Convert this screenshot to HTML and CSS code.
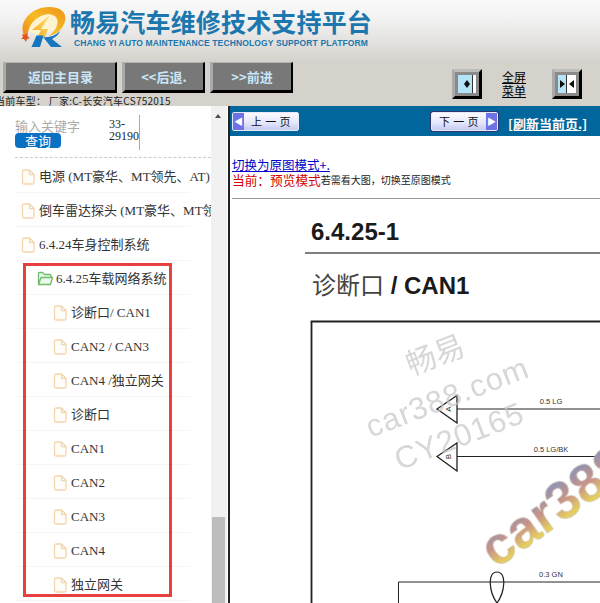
FILE: index.html
```html
<!DOCTYPE html>
<html lang="zh">
<head>
<meta charset="utf-8">
<title>畅易汽车维修技术支持平台</title>
<link rel="stylesheet" href="styles.css">
</head>
<body>
<header class="banner">
  <svg class="logo" width="48" height="42" viewBox="0 0 48 42">
    <defs>
      <linearGradient id="ring" x1="0" y1="1" x2="1" y2="0">
        <stop offset="0" stop-color="#ee8418"/>
        <stop offset="0.5" stop-color="#f8bb24"/>
        <stop offset="1" stop-color="#ee9218"/>
      </linearGradient>
      <linearGradient id="bolt" x1="0" y1="1" x2="1" y2="0">
        <stop offset="0" stop-color="#f4a41c"/>
        <stop offset="1" stop-color="#fbe27a"/>
      </linearGradient>
    </defs>
    <ellipse cx="24" cy="16" rx="16" ry="11" fill="#fdf3cf" transform="rotate(-20 24 16)"/>
    <path d="M6 30C-2 18 10 0 30 0c12 0 18 6 16 14-2 8-8 13-16 15 6-5 10-11 8-17-2-5-10-6-16-3C12 14 8 22 9 31z" fill="url(#ring)"/>
    <path d="M31 8 13 23h9l-5 10 9-3 3-8h-7z" fill="url(#bolt)"/>
    <path d="M3 27l3 1 2-2 0 3 3 2-3 1-1 3-2-3-3 0 2-2z" fill="#e2541c"/>
    <path d="M12.500 40 17.500 28.500H24.500L21 40zM24 30c6 1 12-1 17-6-1 3-4 6-8 8l10 8H32z" fill="#1677c0"/>
  </svg>
  <div class="brand">
    <div class="brand-cn">畅易汽车维修技术支持平台</div>
    <div class="brand-en">CHANG YI AUTO MAINTENANCE TECHNOLOGY SUPPORT PLATFORM</div>
  </div>
</header>

<section class="toolbar">
  <div class="toolbar-main">
    <div class="nav-buttons">
      <a class="bevel-btn btn-home">返回主目录</a>
      <a class="bevel-btn btn-back">&lt;&lt;后退.</a>
      <a class="bevel-btn btn-next">&gt;&gt;前进</a>
    </div>
    <div class="car-info">当前车型： 厂家:C-长安汽车CS752015</div>
  </div>
  <div class="toolbar-tools">
    <div class="tool-icon">
      <svg width="18" height="18" viewBox="0 0 18 18"><rect width="18" height="18" fill="#b4e4f6"/><rect x="15" width="3" height="18" fill="#fff"/><rect x="14" width="1" height="18" fill="#333"/><path d="M6 9l3-4 3 4-3 4z" fill="#111"/></svg>
    </div>
    <a class="fullscreen-link">全屏<br>菜单</a>
    <div class="tool-icon">
      <svg width="18" height="18" viewBox="0 0 18 18"><rect width="9" height="18" fill="#b4e4f6"/><rect x="9" width="9" height="18" fill="#fff"/><rect x="8" width="1" height="18" fill="#333"/><path d="M2 5l5 4-5 4zM16 5l-5 4 5 4z" fill="#111"/></svg>
    </div>
  </div>
</section>

<main class="workspace">
  <aside class="sidebar">
    <div class="side-scroll">
      <div class="search">
        <div class="search-left">
          <div class="search-label">输入关键字</div>
          <button class="search-btn">查询</button>
        </div>
        <div class="search-code">33-<br>29190</div>
      </div>
      <ul class="tree">
        <li class="row"><svg class="doc"><use href="#doc"/></svg><span>电源 (MT豪华、MT领先、AT)</span></li>
        <li class="row"><svg class="doc"><use href="#doc"/></svg><span>倒车雷达探头 (MT豪华、MT领先、AT)</span></li>
        <li class="row"><svg class="doc"><use href="#doc"/></svg><span>6.4.24车身控制系统</span></li>
        <li class="row row-folder">
          <svg class="folder" width="17" height="15" viewBox="0 0 17 15"><path d="M1.500 13V2.500q0-1 1-1h3l2 2h5.500q1 0 1 1V6M1.500 13.500 4 6.500h11.500L13.500 13.500z" fill="#eef8ea" stroke="#6cbc6c" stroke-width="1.300" stroke-linejoin="round"/></svg>
          <span>6.4.25车载网络系统</span>
        </li>
        <li class="row row-child"><svg class="doc"><use href="#doc"/></svg><span>诊断口/ CAN1</span></li>
        <li class="row row-child"><svg class="doc"><use href="#doc"/></svg><span>CAN2 / CAN3</span></li>
        <li class="row row-child"><svg class="doc"><use href="#doc"/></svg><span>CAN4 /独立网关</span></li>
        <li class="row row-child"><svg class="doc"><use href="#doc"/></svg><span>诊断口</span></li>
        <li class="row row-child"><svg class="doc"><use href="#doc"/></svg><span>CAN1</span></li>
        <li class="row row-child"><svg class="doc"><use href="#doc"/></svg><span>CAN2</span></li>
        <li class="row row-child"><svg class="doc"><use href="#doc"/></svg><span>CAN3</span></li>
        <li class="row row-child"><svg class="doc"><use href="#doc"/></svg><span>CAN4</span></li>
        <li class="row row-child"><svg class="doc"><use href="#doc"/></svg><span>独立网关</span></li>
      </ul>
      <div class="highlight-box"></div>
    </div>
    <div class="scrollbar">
      <div class="scroll-up"></div>
      <div class="scroll-thumb"></div>
    </div>
  </aside>

  <section class="content">
    <div class="pager">
      <a class="page-btn page-prev"><span class="page-arrow">&#9664;</span><span class="page-text">上 一 页</span></a>
      <a class="page-btn page-next"><span class="page-text">下 一 页</span><span class="page-arrow">&#9654;</span></a>
      <a class="refresh">[刷新当前页.]</a>
    </div>
    <div class="mode">
      <a class="mode-link">切换为原图模式+.</a>
      <div class="mode-line"><span class="mode-now">当前：预览模式</span><span class="mode-hint">若需看大图，切换至原图模式</span></div>
    </div>
    <svg class="sheet" width="370" height="405" viewBox="230 198 370 405">
      <defs>
        <linearGradient id="rainbow" x1="0" y1="0" x2="0" y2="1">
          <stop offset="0.15" stop-color="#8b93b8"/>
          <stop offset="0.5" stop-color="#c99388"/>
          <stop offset="0.78" stop-color="#e6cf5e"/>
          <stop offset="1" stop-color="#b5ae9c"/>
        </linearGradient>
      </defs>
      <text x="311" y="240" class="sheet-no">6.4.25-1</text>
      <line x1="305" y1="253" x2="600" y2="253" stroke="#555" stroke-width="1.500"/>
      <text x="312" y="294" class="sheet-title"><tspan class="sheet-cjk">诊断口</tspan> / CAN1</text>

      <g fill="none" stroke="#222">
        <path d="M600 321.500H311.500V603" stroke-width="1.800"/>
        <path d="M437 409 457 395.500V423z" stroke-width="1.300"/>
        <path d="M437 456.500 457 443V471z" stroke-width="1.300"/>
        <path d="M457 409H600M457 456.500H600" stroke-width="1"/>
        <path d="M398.500 603V582H600" stroke-width="1"/>
        <path d="M497 603C489 592 487 572 497 572 507 572 505 592 497 603z" stroke-width="1.200"/>
      </g>
      <text class="pin" transform="translate(449 409) rotate(-90)">A</text>
      <text class="pin" transform="translate(449 456.500) rotate(-90)">B</text>
      <text x="551" y="404" class="wire">0.5 LG</text>
      <text x="551" y="452" class="wire">0.5 LG/BK</text>
      <text x="551" y="577" class="wire">0.3 GN</text>

      <g class="mark">
        <text class="mark-cn" transform="translate(439 365) rotate(-21)">畅易</text>
        <text class="mark-en" transform="translate(451 407) rotate(-21)">car388.com</text>
        <text class="mark-en" transform="translate(463 446) rotate(-21)">CY20165</text>
      </g>
      <text class="mark-big" transform="translate(496 569) rotate(-35)">car388</text>
    </svg>
  </section>
</main>

<svg class="sprite" width="0" height="0">
  <symbol id="doc" viewBox="0 0 14 16">
    <path d="M1.500 2.500q0-1.500 1.500-1.500h5.500l4.500 4.500v8q0 1.500-1.500 1.500H3q-1.500 0-1.500-1.500zM8.500 1v4.500H13" fill="#fffdf9" stroke="#f5d5ad" stroke-width="1.300" stroke-linejoin="round"/>
  </symbol>
</svg>
</body>
</html>
```

FILE: styles.css
```css
* { box-sizing: border-box; }
html, body { margin: 0; padding: 0; }
body {
  width: 600px;
  height: 603px;
  overflow: hidden;
  background: #fff;
  font-family: "Liberation Serif", "Noto Sans CJK SC", serif;
  color: #333;
}

.banner {
  height: 61px;
  display: flex;
  align-items: flex-start;
  padding: 7px 0 0 19px;
  background: linear-gradient(#f9f9f9 0%, #f3f3f3 30%, #d6d3ce 100%);
}
.logo { flex: none; margin-right: 3px; }
.brand { display: flex; flex-direction: column; }
.brand-cn {
  font: 700 25px/28px "Noto Sans CJK SC", sans-serif;
  letter-spacing: 0.170px;
  color: #1b77ad;
  white-space: nowrap;
}
.brand-en {
  margin: 2px 0 0 4px;
  font: 700 8.500px/12px "Liberation Sans", sans-serif;
  color: #1b77ad;
  letter-spacing: 0.130px;
  white-space: nowrap;
}

.toolbar {
  height: 45px;
  display: flex;
  background: #d5d2cc;
}
.toolbar-main { width: 445px; padding-top: 1px; }
.nav-buttons { display: flex; height: 31px; padding-left: 3px; }
.bevel-btn {
  display: flex;
  align-items: center;
  justify-content: center;
  border-style: solid;
  border-width: 1px 2px 3px 3px;
  border-color: #b5b5b5 #000 #000 #aaa;
  background: #787878;
  color: #c9e6f7;
  font: 700 13px/1 "Noto Sans CJK SC", sans-serif;
}
.btn-home { width: 114px; margin-right: 5px; }
.btn-back { width: 83px; margin-right: 5px; }
.btn-next { width: 83px; }
.car-info {
  margin: 2px 0 0 -5px;
  font: 10px/12px "Noto Sans CJK SC", sans-serif;
  letter-spacing: 0.250px;
  color: #222;
  white-space: nowrap;
}
.toolbar-tools {
  display: flex;
  align-items: flex-start;
  padding: 8px 0 0 7px;
}
.tool-icon {
  width: 30px;
  height: 30px;
  padding: 3px;
  border-style: solid;
  border-width: 3px;
  border-color: #bdbdbd #000 #000 #aaa;
  background: #8a8a8a;
}
.tool-icon svg { display: block; }
.fullscreen-link {
  width: 24px;
  margin: 0 26px 0 20px;
  font: 12px/14px "Noto Sans CJK SC", sans-serif;
  color: #000;
  text-decoration: underline;
  padding-top: 1px;
}

.workspace {
  display: flex;
  height: 497px;
}
.sidebar {
  width: 230px;
  flex: none;
  display: flex;
  border-right: 2px solid #222;
  overflow: hidden;
}
.side-scroll {
  position: relative;
  width: 211px;
  flex: none;
  overflow: hidden;
}
.search {
  height: 52px;
  margin: 0 0 1px 15px;
  padding-top: 12px;
  display: flex;
  border-bottom: 1px dashed #ccc;
}
.search-left { width: 94px; flex: none; }
.search-label {
  font: 13px/15px "Noto Sans CJK SC", sans-serif;
  color: #aaa;
}
.search-btn {
  display: block;
  width: 46px;
  height: 15px;
  padding: 0;
  border: 0;
  border-radius: 4px;
  background: #0a70c4;
  color: #fff;
  font: 13px/15px "Noto Sans CJK SC", sans-serif;
}
.search-code {
  width: 31px;
  height: 35px;
  margin-top: -3px;
  font: 12px/12px "Liberation Serif", serif;
  color: #222;
  padding-top: 3px;
  border-right: 1px solid #aaa;
  white-space: nowrap;
}
.tree { margin: 0; padding: 0; list-style: none; }
.row {
  width: 175px;
  height: 34px;
  margin-left: 15px;
  padding-top: 2px;
  padding-left: 6px;
  display: flex;
  align-items: center;
  gap: 4px;
  border-bottom: 1px solid #f5f5f5;
  font-size: 13px;
  line-height: 16px;
  white-space: nowrap;
  color: #333;
}
.row span { display: block; width: 172px; overflow: hidden; flex: none; }
.row-folder { padding-left: 22px; gap: 2px; }
.row-folder span { width: 114px; }
.row-child { padding-left: 38px; }
.row-child span { width: 110px; }
.doc { width: 14px; height: 16px; flex: none; }
.folder { flex: none; }
.highlight-box {
  position: absolute;
  left: 23px;
  top: 157px;
  width: 149px;
  height: 334px;
  border: 3px solid #e83f3f;
}

.scrollbar {
  position: relative;
  width: 17px;
  flex: none;
  background: #f1f1f1;
  border-right: 1px solid #fff;
}
.scroll-up {
  position: absolute;
  left: 4px;
  top: 8px;
  border-left: 3.500px solid transparent;
  border-right: 3.500px solid transparent;
  border-bottom: 4px solid #505050;
}
.scroll-thumb {
  position: absolute;
  left: 1px;
  top: 411px;
  width: 13px;
  height: 86px;
  background: #bcbcbc;
}

.content { flex: 1; min-width: 0; }
.pager {
  height: 30px;
  padding: 6px 0 0 2px;
  display: flex;
  background: #00669b;
}
.page-btn {
  width: 67px;
  height: 19px;
  flex: none;
  display: flex;
  align-items: stretch;
  border: 1px solid #e6e9fb;
  border-radius: 2px;
  background: linear-gradient(#fbfbff, #e6e8fc 55%, #c6cbf1);
  font: 11px/17px "Noto Sans CJK SC", sans-serif;
  letter-spacing: 0.400px;
  color: #111;
}
.page-prev { margin-right: 132px; }
.page-next { margin-right: 10px; box-shadow: 0 0 0 1px #2a3a70; }
.page-text { flex: 1; text-align: center; white-space: pre; }
.page-arrow {
  width: 11px;
  flex: none;
  background: #6d73e6;
  color: #fff;
  font-size: 9px;
  letter-spacing: 0;
  text-align: center;
}
.refresh {
  margin-top: 5px;
  font: 700 13px/14px "Noto Sans CJK SC", sans-serif;
  color: #fff;
  text-decoration: underline;
  white-space: nowrap;
}
.mode {
  height: 63px;
  margin-left: 2px;
  padding-top: 21px;
  border-bottom: 1px solid #999;
}
.mode-link {
  display: block;
  font: 12.500px/15px "Noto Sans CJK SC", sans-serif;
  color: #0000c8;
  text-decoration: underline;
}
.mode-line { display: flex; align-items: center; height: 15px; white-space: nowrap; }
.mode-now { font: 12.700px/15px "Noto Sans CJK SC", sans-serif; color: #d40000; }
.mode-hint { font: 10px/15px "Noto Sans CJK SC", sans-serif; color: #222; }

.sheet { display: block; margin-top: -1px; }
.sheet-no { font: 700 24px "Liberation Sans", sans-serif; fill: #1a1a1a; }
.sheet-title { font: 700 24px "Liberation Sans", sans-serif; fill: #1a1a1a; }
.sheet-cjk { font: 400 24px "Noto Sans CJK SC", sans-serif; fill: #444; }
.pin { font: 8px "Liberation Sans", sans-serif; fill: #333; text-anchor: middle; dominant-baseline: middle; }
.wire { font: 7.500px "Liberation Sans", sans-serif; fill: #333; text-anchor: middle; }
.mark { filter: blur(0.4px); }
.mark text { text-anchor: middle; fill: #c6c6c6; opacity: 0.7; }
.mark-cn { font: 400 30px "Noto Sans CJK SC", sans-serif; }
.mark-en { font: 400 31px "Liberation Sans", sans-serif; letter-spacing: 1px; }
.mark-big {
  font: 700 53px "Liberation Sans", sans-serif;
  fill: url(#rainbow);
  stroke: #c8c4b0;
  stroke-width: 0.500;
  filter: blur(0.5px);
}
.sprite { position: absolute; }
```
